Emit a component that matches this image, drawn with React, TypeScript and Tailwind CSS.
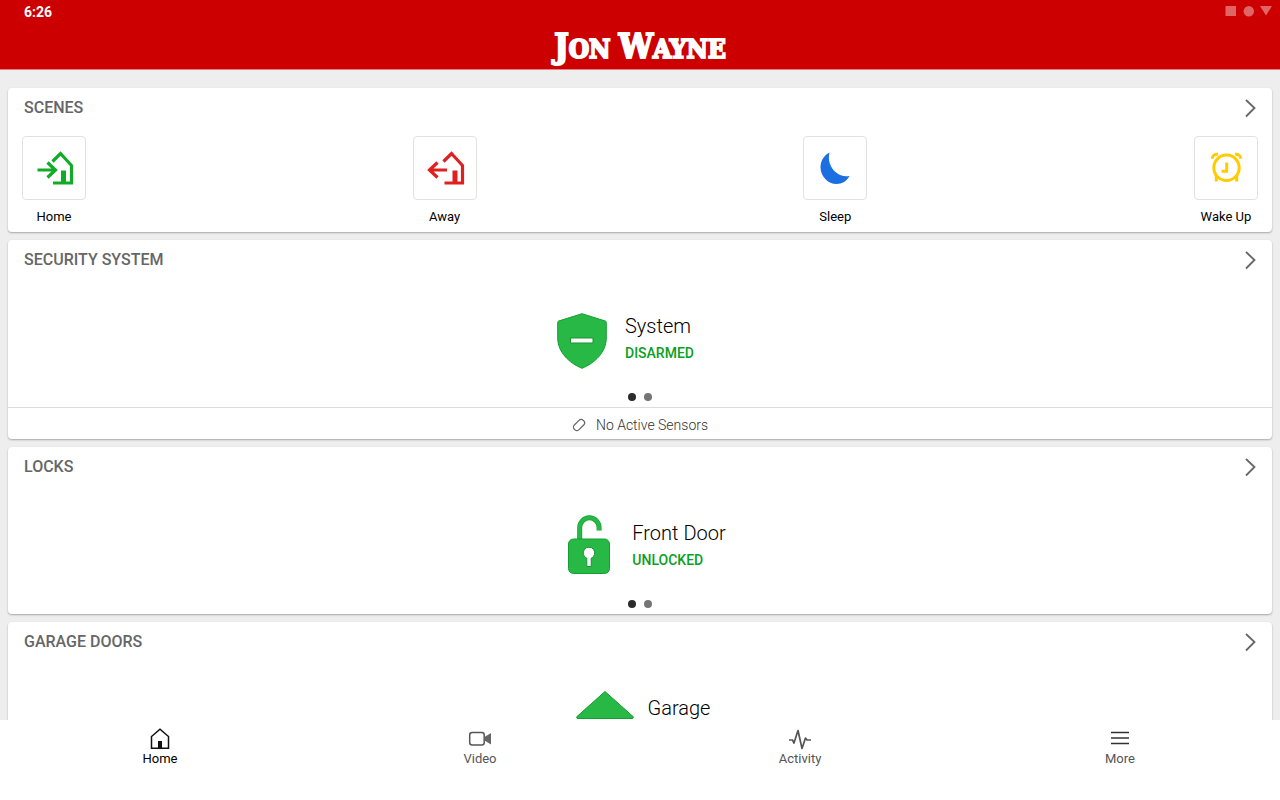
import React from "react";

const SCENES = [
  { name: "Home", icon: <HomeSceneIcon /> },
  { name: "Away", icon: <AwaySceneIcon /> },
  { name: "Sleep", icon: <SleepIcon /> },
  { name: "Wake Up", icon: <AlarmIcon /> },
];

const TABS = [
  { name: "Home", icon: <HomeTabIcon />, active: true },
  { name: "Video", icon: <VideoTabIcon />, active: false },
  { name: "Activity", icon: <ActivityTabIcon />, active: false },
  { name: "More", icon: <MoreTabIcon />, active: false },
];

function HomeSceneIcon() {
  return (
    <svg className="h-10 w-10" viewBox="0 0 40 40" fill="none" stroke="#12ab27" strokeWidth="3.2" aria-hidden="true">
      <path d="M18.500 13.500 26.500 5.500 37.500 17.500V35H19" />
      <path d="M3.500 22H21M13.500 14.500 21.500 22 13.500 29.500" />
      <path d="M27 22.500h5V35H27z" fill="#12ab27" stroke="none" />
    </svg>
  );
}

function AwaySceneIcon() {
  return (
    <svg className="h-10 w-10" viewBox="0 0 40 40" fill="none" stroke="#e01f1f" strokeWidth="3.2" aria-hidden="true">
      <path d="M18.500 13.500 26.500 5.500 37.500 17.500V35H19.500" />
      <path d="M22 22H4.500M12.500 14.500 4.500 22 12.500 29.500" />
      <path d="M27.500 22.500h5V35h-5z" fill="#e01f1f" stroke="none" />
    </svg>
  );
}

function SleepIcon() {
  return (
    <svg className="h-10 w-10" viewBox="0 0 40 40" fill="#1b6fe0" aria-hidden="true">
      <path d="M14.500 4.500C8.500 7.500 5.500 13.500 5.500 19 5.500 28.500 13 36 21.500 36 27 36 32 33 34.500 28 30 29 25 28 20.500 24 15.500 19.500 12.500 12.500 14.500 4.500z" />
    </svg>
  );
}

function AlarmIcon() {
  return (
    <svg className="h-10 w-10" viewBox="0 0 40 40" fill="none" stroke="#ffcc00" strokeWidth="3" aria-hidden="true">
      <circle cx="20.500" cy="19.800" r="12.700" />
      <path d="M20.700 14.500V23.200H15.500" />
      <path d="M10.300 27V33.500M30.700 27V33.500" />
      <path d="M6 10.800C6.500 7.500 9 5.800 12 6.300M35 10.800C34.500 7.500 32 5.800 29 6.300" />
    </svg>
  );
}

function ShieldIcon() {
  return (
    <svg className="h-[62px] w-[50px]" viewBox="0 -5 50 62" aria-hidden="true">
      <path
        d="M25 .7 48.300 8Q49.300 8.400 49.300 9.500V25C49.300 39 38 50 25 55.300 12 50 .7 39 .7 25V9.500Q.7 8.400 1.700 8z"
        fill="#27b846"
        stroke="#12a030"
      />
      <path d="M13.500 25H36V30H13.500z" fill="#fff" stroke="#17942f" />
    </svg>
  );
}

function UnlockIcon() {
  return (
    <svg className="h-[62px] w-[42px]" viewBox="0 0 42 62" aria-hidden="true">
      <path d="M11.700 26V12.500a9.700 9.700 0 0 1 19.400 0V15.500" fill="none" stroke="#12a030" strokeWidth="5" />
      <path d="M11.700 26V12.500a9.700 9.700 0 0 1 19.400 0V15" fill="none" stroke="#27b846" strokeWidth="3.600" />
      <rect x=".5" y="24" width="41" height="34.500" rx="5" fill="#27b846" stroke="#12a030" />
      <path d="M18.800 43.300a5.800 5.800 0 1 1 4.400 0V51.500h-4.400z" fill="#fff" stroke="#17942f" />
    </svg>
  );
}

function GarageIcon() {
  return (
    <svg className="h-[62px] w-[58px]" viewBox="0 0 58 62" fill="#27b846" stroke="#12a030" aria-hidden="true">
      <path d="M29 1.500 57 26.500Q58 28.500 56 28.500H2Q0 28.500 1 26.500z" strokeLinejoin="round" />
    </svg>
  );
}

function SensorIcon() {
  return (
    <svg className="h-[14px] w-[14px]" viewBox="0 0 14 14" fill="none" stroke="#666" strokeWidth="1.200" aria-hidden="true">
      <rect x="3.700" y="0.700" width="6.600" height="12.600" rx="3" transform="rotate(45 7 7)" />
    </svg>
  );
}

function HomeTabIcon() {
  return (
    <svg className="h-6 w-6" viewBox="0 0 24 24" fill="none" stroke="#111" strokeWidth="1.500" aria-hidden="true">
      <path d="M3.500 21.300V9.500L12 2.200 20.500 9.500V21.300z" />
      <path d="M10 14h4v7.300h-4z" fill="#111" stroke="none" />
    </svg>
  );
}

function VideoTabIcon() {
  return (
    <svg className="h-6 w-6" viewBox="0 0 24 24" fill="none" stroke="#555" strokeWidth="1.500" aria-hidden="true">
      <rect x="1.700" y="5.500" width="14.500" height="12.500" rx="2.500" />
      <path d="M16.500 10 23 6V17.500L16.500 13.500z" fill="#666" stroke="none" />
    </svg>
  );
}

function ActivityTabIcon() {
  return (
    <svg className="h-6 w-6" viewBox="0 0 24 24" fill="none" stroke="#555" strokeWidth="1.700" strokeLinejoin="round" aria-hidden="true">
      <path d="M1 13H4.500L6 16 10 3.500 14 21.500 17.500 11 19 13H23" />
    </svg>
  );
}

function MoreTabIcon() {
  return (
    <svg className="h-6 w-6" viewBox="0 0 24 24" fill="none" stroke="#333" strokeWidth="1.500" aria-hidden="true">
      <path d="M3 5.500H21M3 11H21M3 16.500H21" />
    </svg>
  );
}

function Card({ title, children }: { title: string; children: React.ReactNode }) {
  return (
    <section className="shrink-0 rounded bg-white shadow-[0_1px_2px_rgba(0,0,0,0.3)]">
      <div className="flex h-10 items-center justify-between px-4">
        <h2 className="text-base font-medium text-[#666]">{title}</h2>
        <button type="button" aria-label={`Open ${title}`}>
          <svg className="h-5 w-3" viewBox="0 0 12 20" fill="none" stroke="#666" strokeWidth="1.800" aria-hidden="true">
            <path d="M2 2 10.500 10 2 18.500" />
          </svg>
        </button>
      </div>
      {children}
    </section>
  );
}

function Device({ icon, name, status }: { icon: React.ReactNode; name: string; status?: string }) {
  return (
    <div className="flex h-[110px] justify-center pr-2">
      <div className="flex w-[86px] justify-center pt-7">{icon}</div>
      <div className={status === "DISARMED" ? "min-w-[108px] pt-8" : "pt-8"}>
        <p className="text-xl leading-7 font-light text-black">{name}</p>
        {status && <p className="text-sm leading-[26px] font-medium text-[#0ba01e]">{status}</p>}
      </div>
    </div>
  );
}

function Dots() {
  return (
    <div className="flex h-[17px] items-center justify-center gap-2 pb-[3px]">
      <span className="h-2 w-2 rounded-full bg-[#2b2b2b]" />
      <span className="h-2 w-2 rounded-full bg-[#757575]" />
    </div>
  );
}

export default function App() {
  return (
    <div className="flex h-screen flex-col bg-[#eee] font-['Roboto',sans-serif]">
      <header className="h-[70px] shrink-0 border-b border-[#e08080] bg-[#cc0000] text-white">
        <div className="flex h-6 items-center justify-between pl-6 pr-2">
          <span className="text-sm font-bold">6:26</span>
          <svg className="h-3 w-12" viewBox="0 0 48 12" fill="#e06666" aria-hidden="true">
            <path d="M1.500 0H12V10H1.500z" />
            <circle cx="24.800" cy="5.200" r="5.200" />
            <path d="M36 0H48L42 9.500z" />
          </svg>
        </div>
        <h1 className="text-center font-['DejaVu_Serif_Condensed','DejaVu_Serif',serif] text-[26px] leading-11 font-bold [-webkit-text-stroke:2px_white]">
          <span className="text-[34px]">J</span>ON <span className="text-[34px]">W</span>AYNE
        </h1>
      </header>

      <main className="flex min-h-0 flex-1 flex-col gap-2 overflow-hidden px-2 pt-[18px]">
        <Card title="SCENES">
          <div className="flex justify-between px-[14px] pt-2 pb-[7px]">
            {SCENES.map((scene) => (
              <button key={scene.name} type="button" className="flex w-16 flex-col items-center">
                <span className="flex h-16 w-16 items-center justify-center rounded border border-[#e2e2e2]">
                  {scene.icon}
                </span>
                <span className="pt-[9px] text-[13px] leading-4 whitespace-nowrap text-black">{scene.name}</span>
              </button>
            ))}
          </div>
        </Card>

        <Card title="SECURITY SYSTEM">
          <Device icon={<ShieldIcon />} name="System" status="DISARMED" />
          <Dots />
          <div className="flex h-8 items-center justify-center gap-[10px] border-t border-[#ddd] pt-1 pb-[2px] text-sm font-light text-[#333]">
            <SensorIcon />
            No Active Sensors
          </div>
        </Card>

        <Card title="LOCKS">
          <Device icon={<UnlockIcon />} name="Front Door" status="UNLOCKED" />
          <Dots />
        </Card>

        <Card title="GARAGE DOORS">
          <Device icon={<GarageIcon />} name="Garage" />
        </Card>
      </main>

      <nav className="grid h-20 shrink-0 grid-cols-4 bg-white">
        {TABS.map((tab) => (
          <a
            key={tab.name}
            href="#"
            className={
              tab.active
                ? "flex flex-col items-center pt-[7px] text-[13px] leading-4 text-black"
                : "flex flex-col items-center pt-[7px] text-[13px] leading-4 text-[#555]"
            }
          >
            {tab.icon}
            {tab.name}
          </a>
        ))}
      </nav>
    </div>
  );
}
